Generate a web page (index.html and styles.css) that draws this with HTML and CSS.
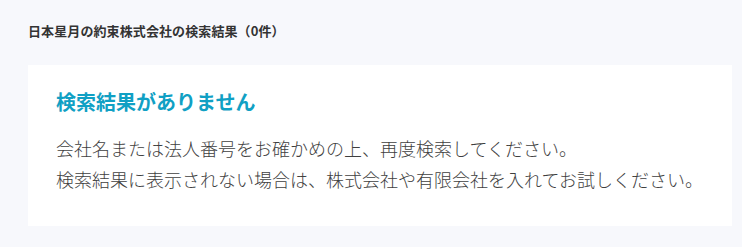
FILE: index.html
```html
<!DOCTYPE html>
<html lang="ja">
<head>
<meta charset="UTF-8">
<title>検索結果</title>
<link rel="stylesheet" href="styles.css">
</head>
<body>

<div id="resultado">
  <h1 class="resumen">日本星月の約束株式会社の検索結果（0件）</h1>

  <div class="vacio">
    <h2>検索結果がありません</h2>
    <p>会社名または法人番号をお確かめの上、再度検索してください。<br>
    検索結果に表示されない場合は、株式会社や有限会社を入れてお試しください。</p>
  </div>
</div>

</body>
</html>
```

FILE: styles.css
```css
body {
  font-family: 'Noto Sans CJK JP', 'Noto Sans', sans-serif;
  margin: 0;
  padding: 0;
  background-color: #f7f8fc;
  color: #333;
}

#resultado {
  padding: 21px 10px 20px 28px;
}

.resumen {
  margin: 0 0 24px;
  font-size: 13px;
  line-height: 20px;
  font-weight: bold;
  letter-spacing: 0.1px;
  color: #333;
}

.vacio {
  background-color: white;
  padding: 23px 28px 31px;
}

.vacio h2 {
  margin: 0 0 17px;
  font-size: 20px;
  line-height: 28px;
  font-weight: bold;
  color: #10a0c4;
}

.vacio p {
  margin: 0;
  font-size: 18px;
  line-height: 31px;
  font-weight: 300;
  color: #3f3f3f;
}
```
